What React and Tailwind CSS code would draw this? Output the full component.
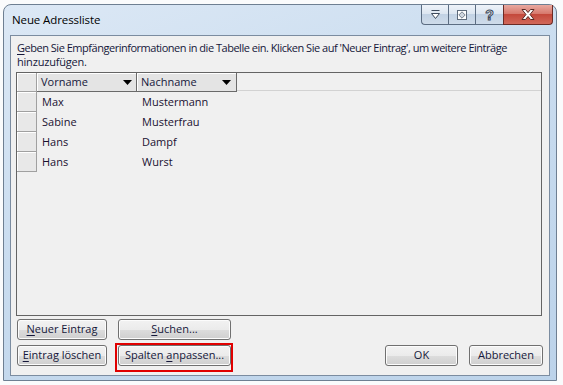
import React from "react";

function WinButton({ children, className = "" }) {
  return (
    <div
      className={
        "h-[21px] rounded-[3px] border border-[#707070] flex items-center justify-center text-[#15173a] bg-[linear-gradient(to_bottom,#f2f2f2_0%,#ebebeb_50%,#dddddd_50%,#cfcfcf_100%)] shadow-[inset_0_0_0_1px_#fcfcfc] " +
        className
      }
    >
      {children}
    </div>
  );
}

function U({ children }) {
  return <span className="underline underline-offset-[2px]">{children}</span>;
}

function Tri() {
  return (
    <svg width="9" height="5" viewBox="0 0 9 5" className="shrink-0">
      <path d="M0 0H9L4.5 5Z" fill="#000" />
    </svg>
  );
}

function RowSel() {
  return (
    <div className="w-[20px] h-[20px] shrink-0 border-r border-b border-[#a0a0a0] bg-[#e8e8e8] shadow-[inset_1px_1px_0_#ffffff]" />
  );
}

const rows = [
  ["Max", "Mustermann"],
  ["Sabine", "Musterfrau"],
  ["Hans", "Dampf"],
  ["Hans", "Wurst"],
];

export default function App() {
  return (
    <div className="w-[563px] h-[385px] bg-[#fafbfc] overflow-hidden font-['Open_Sans',sans-serif] text-[11px]">
      <div className="ml-[3px] mt-[4px] w-[554px] h-[377px] rounded-t-[8px] border border-[#6e7f92] bg-[linear-gradient(160deg,#dce8f5_0%,#c9dcef_45%,#bcd3ea_100%)] flex flex-col">
        {/* Title bar */}
        <div className="h-[30px] flex justify-between pl-[8px] pr-[3px] shrink-0">
          <div className="self-center text-[11.5px] tracking-[-0.1px] text-black leading-none">Neue Adressliste</div>
          <div className="flex h-[20px] self-start">
            <div className="w-[27px] h-full border border-r-0 border-t-0 border-[#5c6d82] rounded-bl-[4px] bg-[linear-gradient(to_bottom,#eef3f9_0%,#dbe5f0_50%,#c2d2e4_50%,#cfdcea_100%)] flex items-center justify-center">
              <svg width="9" height="10" viewBox="0 0 9 10">
                <path d="M0.5 0.5H8.5" stroke="#3d4a5c" strokeWidth="1" />
                <path d="M0.5 3.5H8.5L4.5 8.5Z" fill="#fff" stroke="#3d4a5c" strokeWidth="1" />
              </svg>
            </div>
            <div className="w-[27px] h-full border border-r-0 border-t-0 border-[#5c6d82] bg-[linear-gradient(to_bottom,#eef3f9_0%,#dbe5f0_50%,#c2d2e4_50%,#cfdcea_100%)] flex items-center justify-center">
              <svg width="10" height="10" viewBox="0 0 10 10">
                <rect x="0.5" y="0.5" width="9" height="9" fill="#fff" stroke="#5d6a7a" />
                <path d="M5 1.8L8.2 5L5 8.2L1.8 5Z" fill="#cfd6de" stroke="#5d6a7a" strokeWidth="0.8" />
              </svg>
            </div>
            <div className="w-[28px] h-full border border-r-0 border-t-0 border-[#5c6d82] bg-[linear-gradient(to_bottom,#eef3f9_0%,#dbe5f0_50%,#c2d2e4_50%,#cfdcea_100%)] flex items-center justify-center">
              <span className="font-['Liberation_Sans',sans-serif] font-bold text-[14px] leading-none text-white [-webkit-text-stroke:1px_#3d4a5c]">?</span>
            </div>
            <div className="w-[50px] h-full border border-t-0 border-[#6b2b25] rounded-br-[4px] bg-[linear-gradient(to_bottom,#e9a99f_0%,#d77a6e_45%,#c4493c_50%,#d2685a_100%)] flex items-center justify-center">
              <svg width="14" height="11" viewBox="0 0 14 11">
                <path d="M1 0.5H4.5L7 3.5L9.5 0.5H13L9 5.5L13 10.5H9.5L7 7.5L4.5 10.5H1L5 5.5Z" fill="#fff" stroke="#5a2a25" strokeWidth="1" strokeLinejoin="round" />
              </svg>
            </div>
          </div>
        </div>
        {/* Client area */}
        <div className="px-[6px] pb-[4px] flex-1 flex min-h-0">
          <div className="flex-1 border border-[#7b8ca0] bg-[#f0f0f0] flex flex-col pt-[5px] pb-[9px] text-[#15173a]">
            <div className="pl-[6px] leading-[14px] h-[28px]">
              <div className="whitespace-nowrap tracking-[-0.48px]"><U>G</U>eben Sie Empfängerinformationen in die Tabelle ein. Klicken Sie auf 'Neuer Eintrag', um weitere Einträge</div>
              <div className="whitespace-nowrap tracking-[-0.2px]">hinzuzufügen.</div>
            </div>
            {/* Table */}
            <div className="ml-[5px] mt-[3px] w-[526px] h-[244px] shrink-0 border border-[#646464] bg-[#f0f0f0] flex flex-col">
              <div className="flex h-[19px]">
                <div className="w-[20px] h-[19px] border-r border-b border-[#a0a0a0] bg-[#e8e8e8] shadow-[inset_1px_1px_0_#ffffff]" />
                <div className="w-[100px] h-[19px] border-r border-b border-[#6a6a6a] bg-[#e4e4e4] shadow-[inset_1px_1px_0_#ffffff] flex items-center pl-[4px] pr-[4px] justify-between">
                  <span>Vorname</span>
                  <Tri />
                </div>
                <div className="w-[100px] h-[19px] border-r border-b border-[#6a6a6a] bg-[#e4e4e4] shadow-[inset_1px_1px_0_#ffffff] flex items-center pl-[4px] pr-[5px] justify-between">
                  <span>Nachname</span>
                  <Tri />
                </div>
                <div className="flex-1 h-[18px] border-b border-[#d2d2d2]" />
              </div>
              {rows.map(([a, b], i) => (
                <div key={i} className="flex h-[20px]">
                  <RowSel />
                  <div className="w-[100px] flex items-center pl-[5px] text-[#1a1030]">{a}</div>
                  <div className="w-[100px] flex items-center pl-[5px] text-[#1a1030]">{b}</div>
                </div>
              ))}
            </div>
            {/* Buttons */}
            <div className="flex justify-between items-end mt-[3px] px-[6px]">
              <div className="flex gap-[11px]">
                <div className="flex flex-col gap-[5px]">
                  <WinButton className="w-[90px]"><span><U>N</U>euer Eintrag</span></WinButton>
                  <WinButton className="w-[90px]"><span><U>E</U>intrag löschen</span></WinButton>
                </div>
                <div className="flex flex-col gap-[5px]">
                  <WinButton className="w-[113px]"><span><U>S</U>uchen...</span></WinButton>
                  <div className="relative">
                    <WinButton className="w-[113px]"><span>Spalten <U>a</U>npassen...</span></WinButton>
                    <div className="absolute left-[-3px] top-[-2px] w-[118px] h-[29px] border-2 border-[#e00000]" />
                  </div>
                </div>
              </div>
              <div className="flex gap-[11px]">
                <WinButton className="w-[73px]">OK</WinButton>
                <WinButton className="w-[74px]">Abbrechen</WinButton>
              </div>
            </div>
          </div>
        </div>
      </div>
    </div>
  );
}
